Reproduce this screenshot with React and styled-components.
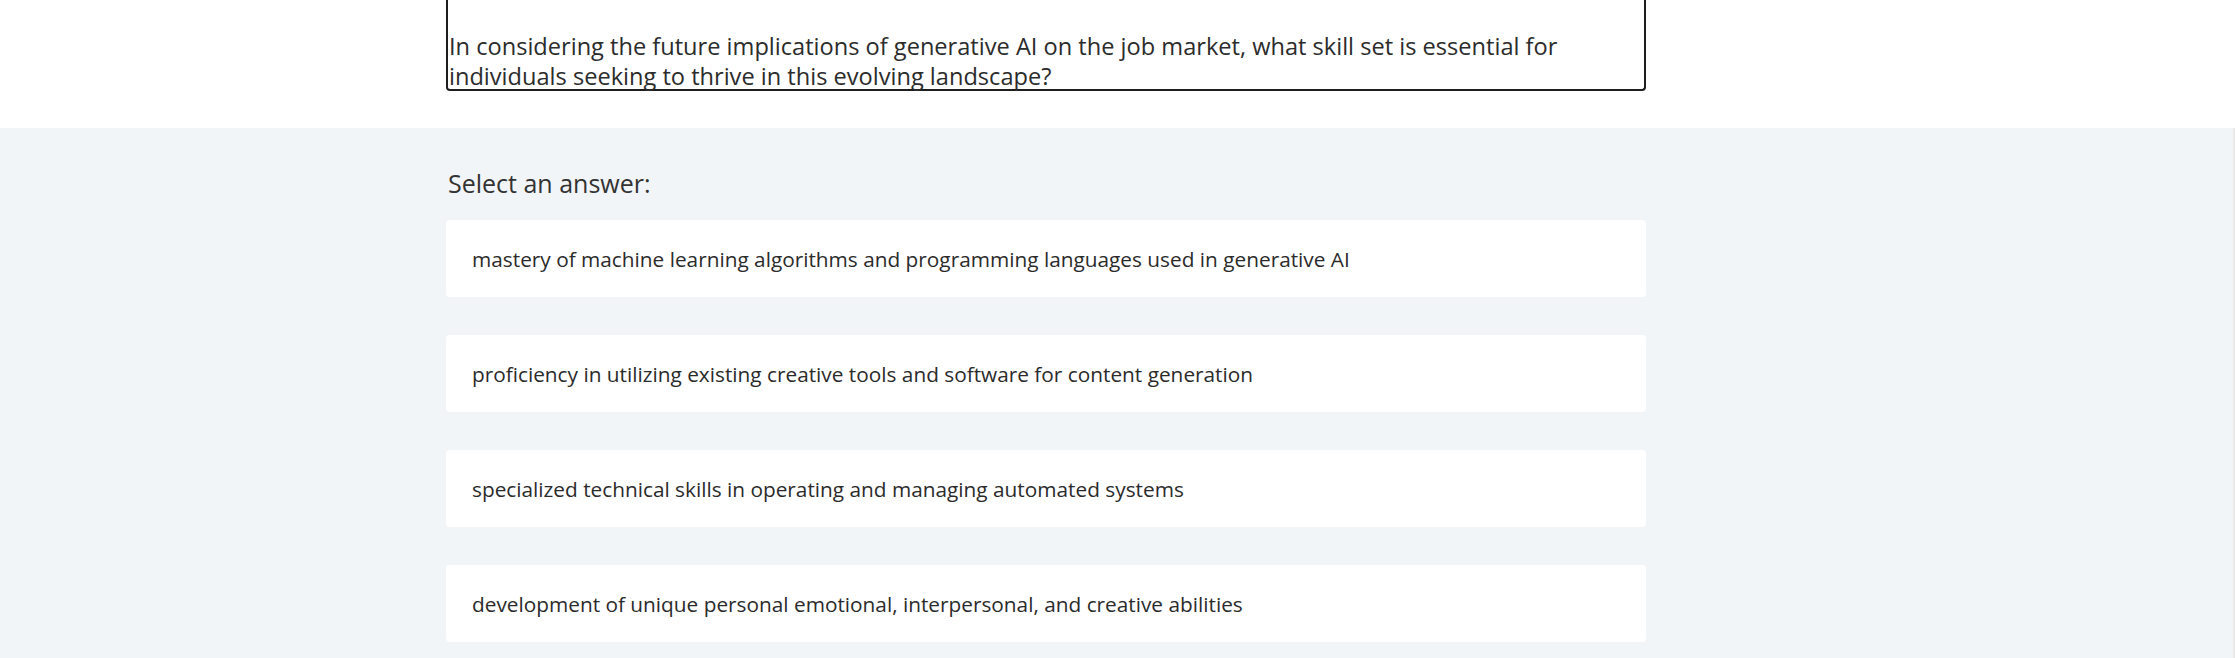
import React from "react";
import styled, { createGlobalStyle } from "styled-components";

const GlobalStyle = createGlobalStyle`
  html, body {
    margin: 0;
    padding: 0;
  }
  body {
    background: #f2f5f8;
    font-family: "Open Sans", "Noto Sans", Arial, sans-serif;
    color: #333333;
  }
  * { box-sizing: border-box; }
`;

const Page = styled.div`
  min-height: 658px;
  box-shadow: inset -2px 0 0 #e9e9e9;
`;

const Header = styled.header`
  background: #ffffff;
  height: 128px;
  padding-left: 446px;
`;

const QuestionBox = styled.div`
  width: 1200px;
  height: 91px;
  border: 2px solid #1e1e1e;
  border-top: none;
  border-radius: 0 0 4px 4px;
  display: flex;
  align-items: flex-end;
  padding: 0 0 0 1px;
`;

const QuestionText = styled.p`
  margin: 0 0 -2px 0;
  font-size: 23.6px;
  line-height: 30px;
  color: #2c2c2c;
`;

const Main = styled.main`
  padding: 41px 0 0 446px;
  width: 1646px;
`;

const Label = styled.div`
  font-size: 25px;
  line-height: 28px;
  color: #333333;
  padding-left: 2px;
  margin-bottom: 23px;
`;

const OptionList = styled.ul`
  list-style: none;
  margin: 0;
  padding: 0;
  display: flex;
  flex-direction: column;
  gap: 38px;
`;

const Option = styled.li`
  height: 77px;
  background: #ffffff;
  border-radius: 4px;
  display: flex;
  align-items: center;
  padding: 0 26px;
  font-size: 20.8px;
  color: #2b2b2b;
  cursor: pointer;
`;

const options = [
  "mastery of machine learning algorithms and programming languages used in generative AI",
  "proficiency in utilizing existing creative tools and software for content generation",
  "specialized technical skills in operating and managing automated systems",
  "development of unique personal emotional, interpersonal, and creative abilities",
];

export default function App() {
  return (
    <Page>
      <GlobalStyle />
      <Header>
        <QuestionBox>
          <QuestionText>
            In considering the future implications of generative AI on the job market, what skill set is essential for individuals seeking to thrive in this evolving landscape?
          </QuestionText>
        </QuestionBox>
      </Header>
      <Main>
        <Label>Select an answer:</Label>
        <OptionList>
          {options.map((o) => (
            <Option key={o}>{o}</Option>
          ))}
        </OptionList>
      </Main>
    </Page>
  );
}
